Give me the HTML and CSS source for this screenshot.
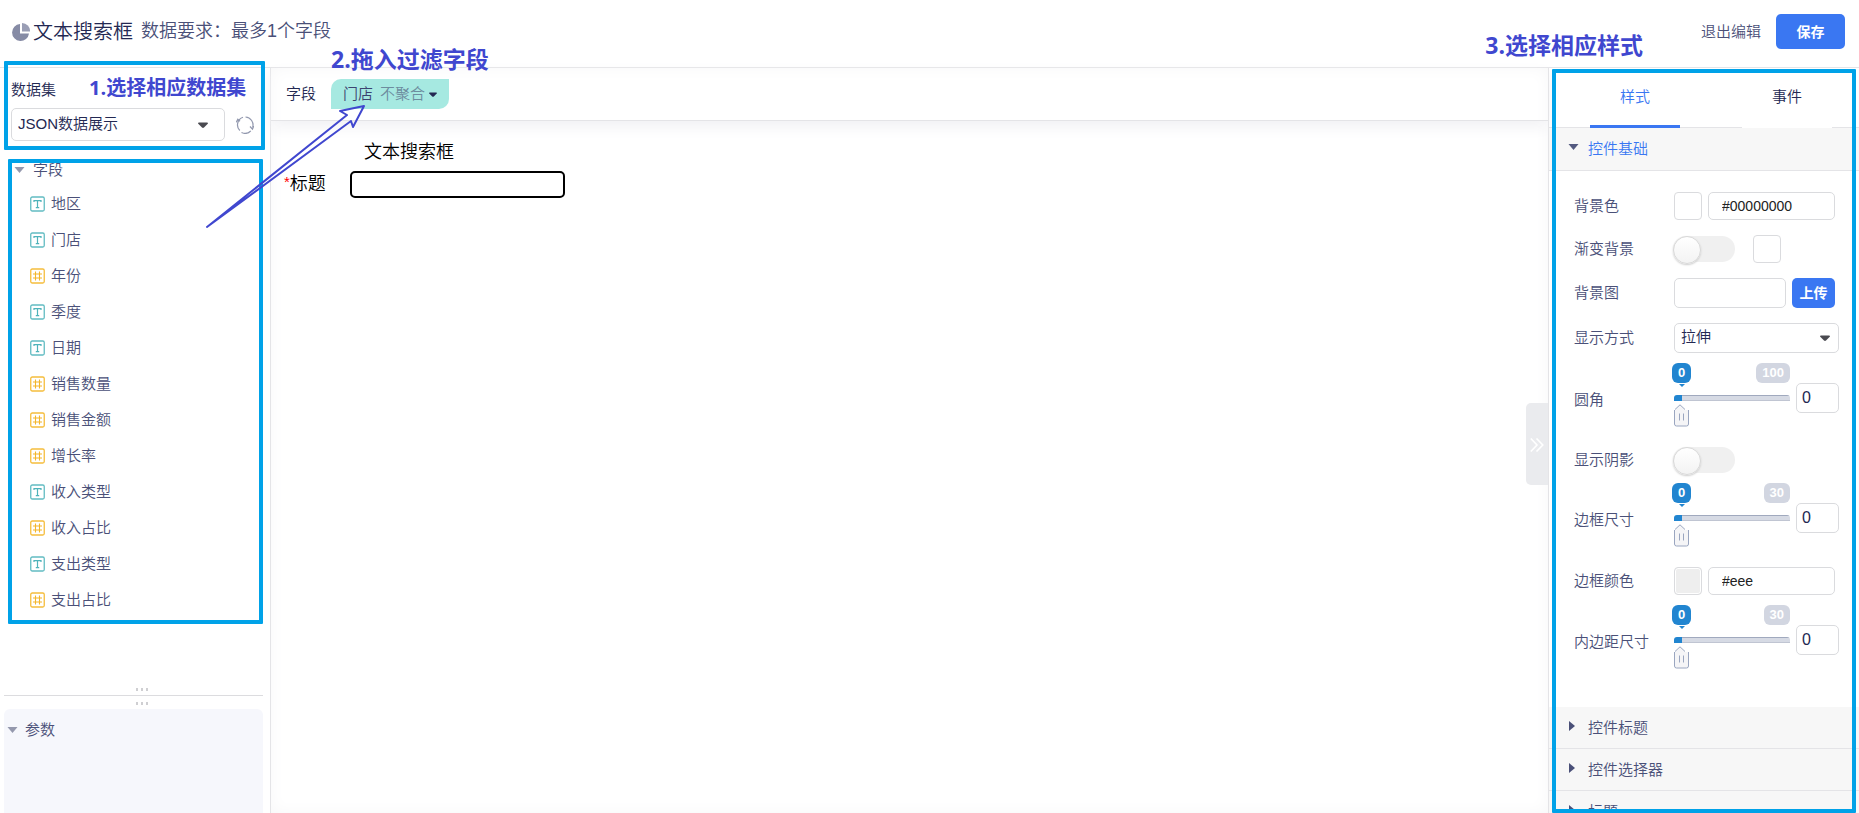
FILE: index.html
```html
<!DOCTYPE html>
<html lang="zh-CN">
<head>
<meta charset="utf-8">
<title>文本搜索框</title>
<link rel="stylesheet" href="styles.css">
</head>
<body>
<svg class="defs" aria-hidden="true">
  <symbol id="i-text" viewBox="0 0 15 16">
    <rect x="0.75" y="1" width="13.5" height="14" rx="1.5" fill="none" stroke="#62bcc2" stroke-width="1.3"/>
    <path d="M4 6V4.600h7V6M7.500 4.600v7M5.800 11.600h3.400" fill="none" stroke="#4fb3ba" stroke-width="1.200"/>
  </symbol>
  <symbol id="i-num" viewBox="0 0 15 16">
    <rect x="0.75" y="1" width="13.5" height="14" rx="1.500" fill="none" stroke="#f5bd3c" stroke-width="1.300"/>
    <path d="M5.500 3.500v9M9.500 3.500v9M3 6h9M3 10h9" fill="none" stroke="#f3b62a" stroke-width="1.100"/>
  </symbol>
  <symbol id="i-down" viewBox="0 0 10 6"><path d="M0 0h10L5 6z" fill="currentColor"/></symbol>
  <symbol id="i-caret" viewBox="0 0 10 6"><path d="M0 1.500Q0 .5 1 .5h8q1 0 1 1L6 5.500q-1 .8-2 0z" fill="currentColor"/></symbol>
  <symbol id="i-right" viewBox="0 0 6 10"><path d="M0 0v10l6-5z" fill="currentColor"/></symbol>
</svg>

<header class="header">
  <svg class="pie" viewBox="0 0 18 18"><path d="M8 1a8.500 8.500 0 1 0 9 9.500H8z" fill="#868ba5"/><path d="M10 0a8 8 0 0 1 8 8.500h-8z" fill="#9a9eb5"/></svg>
  <h1 class="title">文本搜索框</h1>
  <p class="subtitle">数据要求：最多1个字段</p>
  <div class="actions">
    <a class="exit" href="#">退出编辑</a>
    <button class="btn save" type="button">保存</button>
  </div>
</header>

<div class="workspace">
  <aside class="sidebar">
    <section class="dataset">
      <label class="dataset-label" for="dataset">数据集</label>
      <div class="dataset-row">
        <div class="select dataset-select">
          <select id="dataset"><option>JSON数据展示</option></select>
          <svg class="select-caret"><use href="#i-caret"/></svg>
        </div>
        <button class="refresh" type="button" aria-label="刷新">
          <svg viewBox="0 0 18 18" fill="none" stroke="#9298ae" stroke-width="1.200"><path d="M7 1.300A8 8 0 0 0 3.800 14.500M.3 6.300 1.800 3.300 4 5.300M9.500 1A8 8 0 0 1 16.600 11.500M14 10.500l2.500 2.700L17.800 10M14.800 14.800A8 8 0 0 1 5.500 16.500"/></svg>
        </button>
      </div>
    </section>
    <section class="fields">
      <h2 class="tree-head"><svg class="tree-caret"><use href="#i-down"/></svg>字段</h2>
      <ul class="tree">
        <li><svg><use href="#i-text"/></svg>地区</li>
        <li><svg><use href="#i-text"/></svg>门店</li>
        <li><svg><use href="#i-num"/></svg>年份</li>
        <li><svg><use href="#i-text"/></svg>季度</li>
        <li><svg><use href="#i-text"/></svg>日期</li>
        <li><svg><use href="#i-num"/></svg>销售数量</li>
        <li><svg><use href="#i-num"/></svg>销售金额</li>
        <li><svg><use href="#i-num"/></svg>增长率</li>
        <li><svg><use href="#i-text"/></svg>收入类型</li>
        <li><svg><use href="#i-num"/></svg>收入占比</li>
        <li><svg><use href="#i-text"/></svg>支出类型</li>
        <li><svg><use href="#i-num"/></svg>支出占比</li>
      </ul>
    </section>
    <div class="splitter">
      <div class="dots"><i></i><i></i><i></i></div>
      <hr>
      <div class="dots"><i></i><i></i><i></i></div>
    </div>
    <section class="params">
      <h2 class="tree-head params-head"><svg class="tree-caret"><use href="#i-down"/></svg>参数</h2>
    </section>
  </aside>

  <main class="main">
    <div class="toolbar">
      <span>字段</span>
      <button class="chip" type="button">门店 <span class="chip-agg">不聚合</span><svg><use href="#i-caret"/></svg></button>
    </div>
    <div class="canvas">
      <h2 class="canvas-title">文本搜索框</h2>
      <div class="search">
        <label for="search"><span class="star">*</span>标题</label>
        <input id="search" type="text">
      </div>
      <button class="collapse" type="button" aria-label="收起面板">
        <svg viewBox="0 0 14 14" fill="none" stroke="#fff" stroke-width="1.600"><path d="M.8.5 7 7 .8 13.500M6.500.5l6.300 6.500-6.300 6.500"/></svg>
      </button>
    </div>
  </main>

  <aside class="panel">
    <div class="tabs" role="tablist">
      <button class="tab active" type="button" role="tab" aria-selected="true">样式</button>
      <button class="tab" type="button" role="tab" aria-selected="false">事件</button>
    </div>
    <button class="fold open" type="button"><svg><use href="#i-down"/></svg>控件基础</button>
    <div class="form">
      <div class="row">
        <label for="bg">背景色</label>
        <button class="swatch" type="button" aria-label="选择背景色"></button>
        <input class="box color" id="bg" type="text" value="#00000000">
      </div>
      <div class="row">
        <label for="grad">渐变背景</label>
        <input class="toggle" id="grad" type="checkbox">
        <button class="swatch swatch-grad" type="button" aria-label="选择渐变色"></button>
      </div>
      <div class="row">
        <label for="img">背景图</label>
        <input class="box image" id="img" type="text">
        <button class="btn upload" type="button">上传</button>
      </div>
      <div class="row">
        <label for="mode">显示方式</label>
        <div class="select mode">
          <select id="mode"><option>拉伸</option></select>
          <svg class="select-caret"><use href="#i-caret"/></svg>
        </div>
      </div>
      <div class="row slider-row">
        <label for="radius">圆角</label>
        <div class="slider">
          <div class="badges"><output class="badge now">0</output><span class="badge">100</span></div>
          <input class="range" id="radius" type="range" min="0" max="100" value="0">
        </div>
        <input class="box num" type="text" value="0" aria-label="圆角数值">
      </div>
      <div class="row">
        <label for="shadow">显示阴影</label>
        <input class="toggle" id="shadow" type="checkbox">
      </div>
      <div class="row slider-row">
        <label for="border">边框尺寸</label>
        <div class="slider">
          <div class="badges"><output class="badge now">0</output><span class="badge">30</span></div>
          <input class="range" id="border" type="range" min="0" max="30" value="0">
        </div>
        <input class="box num" type="text" value="0" aria-label="边框尺寸数值">
      </div>
      <div class="row">
        <label for="bcolor">边框颜色</label>
        <button class="swatch filled" type="button" aria-label="选择边框颜色"></button>
        <input class="box color" id="bcolor" type="text" value="#eee">
      </div>
      <div class="row slider-row">
        <label for="pad">内边距尺寸</label>
        <div class="slider">
          <div class="badges"><output class="badge now">0</output><span class="badge">30</span></div>
          <input class="range" id="pad" type="range" min="0" max="30" value="0">
        </div>
        <input class="box num" type="text" value="0" aria-label="内边距数值">
      </div>
    </div>
    <button class="fold" type="button"><svg><use href="#i-right"/></svg>控件标题</button>
    <button class="fold" type="button"><svg><use href="#i-right"/></svg>控件选择器</button>
    <button class="fold" type="button"><svg><use href="#i-right"/></svg>标题</button>
  </aside>
</div>

<div class="mark mark-dataset"></div>
<div class="mark mark-fields"></div>
<div class="mark mark-panel"></div>
<p class="note note-1">1.选择相应数据集</p>
<p class="note note-2">2.拖入过滤字段</p>
<p class="note note-3">3.选择相应样式</p>
<svg class="arrow" viewBox="0 0 170 130" fill="none" stroke="#4047cf" stroke-width="2" stroke-linejoin="round"><path d="M7 127 147 15l-7-4 24-5-11 21-2-6z"/></svg>
</body>
</html>
```

FILE: styles.css
```css
* { box-sizing: border-box; }

body {
  margin: 0;
  height: 100vh;
  overflow: hidden;
  position: relative;
  display: flex;
  flex-direction: column;
  background: #fff;
  color: #4a5078;
  font: 350 15px/20px "Liberation Sans", "Noto Sans CJK SC", sans-serif;
}

h1, h2, p, ul { margin: 0; padding: 0; font-weight: inherit; }
button, input, select { font: inherit; color: inherit; margin: 0; }
button { padding: 0; border: 0; background: none; cursor: pointer; }
svg { flex: none; display: block; }
.defs { position: absolute; width: 0; height: 0; }

/* header */
.header {
  flex: none;
  height: 68px;
  padding: 0 14px 4px 12px;
  display: flex;
  align-items: center;
  border-bottom: 1px solid #e4e4e7;
}
.pie { width: 18px; height: 18px; margin-right: 3px; }
.title { font-size: 20px; line-height: 28px; color: #232852; margin-right: 8px; }
.subtitle { font-size: 18px; line-height: 26px; padding-bottom: 2px; }
.actions { margin-left: auto; display: flex; align-items: center; gap: 15px; }
.exit { color: inherit; text-decoration: none; }
.btn {
  border-radius: 5px;
  background: #3a77f2;
  color: #fff;
  font-weight: 700;
  font-size: 14px;
}
.save { width: 69px; height: 35px; }

/* layout */
.workspace { flex: 1; min-height: 0; display: flex; }
.sidebar { flex: none; width: 271px; border-right: 1px solid #e4e4e7; display: flex; flex-direction: column; }
.main { flex: 1; min-width: 0; display: flex; flex-direction: column; box-shadow: inset 0 0 16px #f7f7f8; }
.panel { flex: none; width: 311px; border-left: 1px solid #e4e4e7; overflow: hidden; }

/* dataset */
.dataset { padding: 12px 11px 0; }
.dataset-label { display: block; margin-bottom: 8px; color: #232852; }
.dataset-row { display: flex; align-items: center; gap: 11px; }
.select { position: relative; color: #232852; }
.select select {
  appearance: none;
  width: 100%;
  height: 100%;
  padding: 0 24px 2px 6px;
  border: 1px solid #dadbde;
  border-radius: 5px;
  background: #fff;
}
.select-caret { position: absolute; right: 9px; top: 50%; width: 10px; height: 6px; margin-top: -3px; color: #4a4a50; pointer-events: none; }
.dataset-select { width: 214px; height: 33px; }
.dataset-select .select-caret { right: 17px; }
.refresh svg { width: 18px; height: 18px; }

/* field tree */
.fields { flex: 1; min-height: 0; overflow: hidden; padding: 19px 14px 0; }
.tree-head { display: flex; align-items: center; gap: 8px; font-size: 15px; line-height: 20px; }
.tree-caret { width: 11px; height: 6px; color: #9498ad; }
.tree { list-style: none; padding-top: 6px; }
.tree li { height: 36px; padding-left: 16px; display: flex; align-items: center; gap: 6px; }
.tree svg { width: 15px; height: 16px; }

.splitter { flex: none; padding: 0 7px 4px 4px; }
.splitter hr { margin: 4px 0 6px; border: 0; border-top: 1px solid #dcdcdf; }
.dots { display: flex; justify-content: center; gap: 3px; padding-left: 16px; }
.dots i { width: 2px; height: 3px; background: #cfcfd2; }
.params { flex: none; height: 104px; margin: 0 7px 0 4px; padding: 11px 3px; border-radius: 6px 6px 0 0; background: #f6f7fc; }
.params-head { gap: 7px; }

/* canvas */
.toolbar {
  flex: none;
  height: 53px;
  padding: 0 15px;
  display: flex;
  align-items: center;
  gap: 15px;
  border-bottom: 1px solid #e4e4e7;
  box-shadow: 0 6px 14px #f1f1f4;
  color: #232852;
}
.chip {
  height: 30px;
  padding: 0 12px;
  display: flex;
  align-items: center;
  gap: 7px;
  border-radius: 10px 0;
  background: #a6e9e1;
  color: #3c4370;
}
.chip-agg { color: #6d8d9f; }
.chip svg { width: 8px; height: 5px; margin-left: -3px; color: #232852; }
.canvas { flex: 1; position: relative; padding: 19px 13px; color: #000; font-size: 18px; line-height: 24px; }
.canvas-title { font-size: 18px; padding-left: 80px; }
.search { display: flex; align-items: center; gap: 24px; margin-top: 7px; }
.search label { display: flex; padding-bottom: 2px; }
.star { color: #f00; font-size: 15px; line-height: 20px; }
.search input { width: 215px; height: 27px; border: 2px solid #000; border-radius: 5px; background: #fff; }
.collapse {
  position: absolute;
  right: 0;
  top: 50%;
  width: 22px;
  height: 82px;
  margin-top: -64px;
  padding: 2px 0 0 4px;
  border-radius: 5px 0 0 5px;
  background: #eaebee;
}
.collapse svg { width: 14px; height: 14px; }

/* property panel */
.tabs { height: 60px; padding-left: 41px; display: flex; gap: 62px; border-bottom: 1px solid #e4e4e7; }
.tab { width: 90px; height: 60px; border-bottom: 3px solid #fff; color: #232852; }
.tab.active { color: #3a77f2; border-color: #3a77f2; }
.fold {
  width: 100%;
  height: 42px;
  padding-left: 20px;
  display: flex;
  align-items: center;
  gap: 13px;
  border-bottom: 1px solid #e4e4e7;
  background: #f7f7f7;
}
.fold svg { width: 6px; height: 10px; margin-bottom: 4px; }
.fold.open { height: 43px; padding-left: 19px; gap: 9px; color: #3a77f2; }
.fold.open svg { width: 11px; height: 6px; color: #545a80; }

.form { padding: 21px 20px 39px 25px; }
.row { display: flex; align-items: center; gap: 6px; margin-top: 15px; }
.row:first-child { margin-top: 0; }
.row.slider-row { margin-top: 10px; }
.slider-row + .row { margin-top: 21px; }
.row > label { width: 94px; flex: none; }
.slider-row > label { margin-top: 11px; }
.box { height: 30px; min-width: 0; padding: 0 6px 1px; border: 1px solid #dadbde; border-radius: 5px; background: #fff; color: #232852; }
.box.color { width: 127px; height: 28px; padding-left: 13px; color: #222; font-size: 14px; }
.box.image { width: 112px; }
.box.num { width: 43px; margin-top: 7px; font-size: 16px; padding-left: 5px; }
.swatch { width: 28px; height: 28px; border: 1px solid #dadbde; border-radius: 4px; background: #fff; }
.swatch.filled { background: #eee; box-shadow: inset 0 0 0 1px #fff; }
.swatch-grad { margin-left: 12px; }
.upload { width: 43px; height: 30px; }
.mode { width: 165px; height: 30px; }

.toggle { appearance: none; width: 62px; height: 26px; border-radius: 13px; background: #f0f0f0; margin-left: -1px; }
.toggle::before {
  content: "";
  display: block;
  width: 26px;
  height: 26px;
  border: 1px solid #d8d8d8;
  border-radius: 50%;
  background: linear-gradient(#fff, #f3f3f3);
  box-shadow: 0 1px 2px #ccc;
}

.slider { width: 116px; height: 63px; }
.badges { display: flex; justify-content: space-between; height: 32px; align-items: flex-start; margin-left: -2px; }
.badge {
  position: relative;
  height: 20px;
  padding: 0 6px;
  border-radius: 6px;
  background: #d2d6e1;
  color: #fff;
  font: 700 13px/19px "Liberation Sans", sans-serif;
}
.now { background: #2185d0; }
.now::after {
  content: "";
  position: absolute;
  left: 50%;
  top: 21px;
  margin-left: -3px;
  border: 3px solid transparent;
  border-top-color: #2185d0;
}
.range { appearance: none; display: block; width: 100%; height: 31px; background: none; }
.range::-webkit-slider-runnable-track {
  height: 31px;
  background:
    linear-gradient(#2185d0, #2185d0) 0 0 / 8px 6px no-repeat,
    linear-gradient(#a0a9be 0 1px, #d6dae4 1px 5px, #c0c5d2 5px) 0 0 / 100% 6px no-repeat;
  border-radius: 3px;
}
.range::-webkit-slider-thumb {
  appearance: none;
  width: 16px;
  height: 23px;
  margin-top: 9px;
  background: url("data:image/svg+xml,%3Csvg xmlns='http://www.w3.org/2000/svg' viewBox='0 0 16 23'%3E%3Cpath d='M.5 6.500 6 .8l5 5.200h3.500v14q0 2-2 2h-10q-2 0-2-2z' fill='%23f5f5f7'/%3E%3Cpath d='M.5 6v14q0 2 2 2h10q2 0 2-2V6M1 5.500 6 .8l5 4.700M5.500 9.500v7M9.500 9.500v7' fill='none' stroke='%239aa6c0'/%3E%3C/svg%3E") no-repeat;
}

/* tutorial marks drawn over the editor */
.mark { position: absolute; border: 4px solid #00a2e8; border-radius: 1px; pointer-events: none; }
.mark-dataset { left: 4px; top: 61px; width: 261px; height: 89px; }
.mark-fields { left: 8px; top: 159px; width: 255px; height: 465px; }
.mark-panel { right: 3px; top: 69px; bottom: 0; width: 304px; }
.note { position: absolute; color: #4047cf; font: 700 23px/28px "Open Sans", "Noto Sans CJK SC", sans-serif; white-space: nowrap; }
.note-1 { left: 89px; top: 74px; font-size: 20px; }
.note-2 { left: 331px; top: 45px; }
.note-3 { right: 216px; top: 31px; }
.arrow { position: absolute; left: 200px; top: 100px; width: 170px; height: 130px; pointer-events: none; }
```
